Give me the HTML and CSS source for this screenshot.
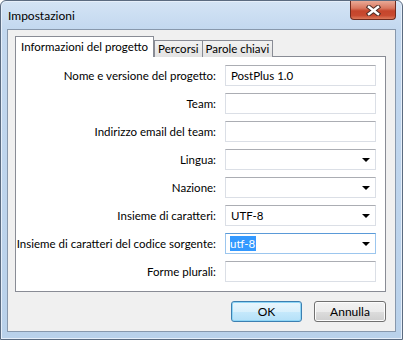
FILE: index.html
```html
<!DOCTYPE html>
<html lang="it">
<head>
    <meta charset="UTF-8">
    <title>Impostazioni</title>
    <link rel="stylesheet" href="styles.css">
</head>
<body>
    <div class="window">
        <div class="titlebar">
            <span class="title">Impostazioni</span>
            <div class="close">
                <svg width="15" height="11" viewBox="0 0 15 11">
                    <path d="M3 2 L12 9 M12 2 L3 9" stroke="#4a2a24" stroke-width="4.4" stroke-linecap="square"/>
                    <path d="M3 2 L12 9 M12 2 L3 9" stroke="#ffffff" stroke-width="2.5" stroke-linecap="square"/>
                </svg>
            </div>
        </div>
        <div class="client">
            <div class="tabs">
                <div class="tab active">Informazioni del progetto</div>
                <div class="tab">Percorsi</div>
                <div class="tab">Parole chiavi</div>
            </div>
            <div class="pane">
                <div class="form-grid">
                    <label>Nome e versione del progetto:</label>
                    <div class="field">PostPlus 1.0</div>

                    <label>Team:</label>
                    <div class="field"></div>

                    <label>Indirizzo email del team:</label>
                    <div class="field"></div>

                    <label>Lingua:</label>
                    <div class="field combo"><span></span><i class="arrow"></i></div>

                    <label>Nazione:</label>
                    <div class="field combo"><span></span><i class="arrow"></i></div>

                    <label>Insieme di caratteri:</label>
                    <div class="field combo"><span>UTF-8</span><i class="arrow"></i></div>

                    <label>Insieme di caratteri del codice sorgente:</label>
                    <div class="field combo focused"><span class="selected">utf-8</span><i class="arrow"></i></div>

                    <label>Forme plurali:</label>
                    <div class="field"></div>
                </div>
            </div>
            <div class="buttons">
                <button class="btn default">OK</button>
                <button class="btn">Annulla</button>
            </div>
        </div>
    </div>
</body>
</html>
```

FILE: styles.css
```css
body {
    margin: 0;
    padding: 0;
    font-family: 'Lato', sans-serif;
    font-size: 11.5px;
    color: #000;
    background: #fff;
}

.window {
    width: 403px;
    height: 340px;
    box-sizing: border-box;
    border: 1px solid #5b6b80;
    border-radius: 6px 6px 0 0;
    padding: 0 6px 7px;
    display: flex;
    flex-direction: column;
    background: linear-gradient(180deg, #d4e4f5 0px, #c3d8ef 28px, #b9d1ea 100%);
    box-shadow: inset 0 0 0 1px #e6effa;
}

.titlebar {
    height: 28px;
    display: flex;
    align-items: flex-start;
}

.title {
    padding: 7px 0 0 1px;
    font-size: 12px;
    color: #000;
}

.close {
    margin-left: auto;
    width: 46px;
    height: 19px;
    box-sizing: border-box;
    border: 1px solid #6e2b1f;
    border-top: none;
    border-radius: 0 0 4px 4px;
    background: linear-gradient(180deg, #e9a996 0%, #d9775f 40%, #c5452c 55%, #c84a30 80%, #dd7a5c 100%);
    display: flex;
    align-items: center;
    justify-content: center;
}

.client {
    flex: 1;
    background: #f0f0f0;
    border: 1px solid #8898ac;
    padding: 7px 9px 8px 7px;
    display: flex;
    flex-direction: column;
}

.tabs {
    display: flex;
    align-items: flex-end;
    height: 20px;
    margin-bottom: -1px;
    position: relative;
    z-index: 1;
}

.tab {
    height: 17px;
    box-sizing: border-box;
    border: 1px solid #898c95;
    border-bottom: none;
    margin-left: -1px;
    padding: 0 3px;
    line-height: 16px;
    background: linear-gradient(180deg, #f2f2f2, #e3e3e3);
}

.tab.active {
    height: 21px;
    margin-left: 0;
    padding: 0 5px;
    line-height: 19px;
    background: #fff;
    margin-right: 1px;
}

.pane {
    background: #fff;
    border: 1px solid #898c95;
    padding: 8px 9px 9px 0;
}

.form-grid {
    display: grid;
    grid-template-columns: minmax(0, 1fr) 151px;
    grid-auto-rows: 21px;
    column-gap: 9px;
    row-gap: 7px;
}

.form-grid label {
    text-align: right;
    line-height: 21px;
    white-space: nowrap;
    color: #000;
}

.field {
    box-sizing: border-box;
    border: 1px solid #dbdfe6;
    border-top-color: #abadb3;
    background: #fff;
    padding: 0 5px;
    line-height: 19px;
    display: flex;
    align-items: center;
}

.combo span {
    flex: 1;
}

.arrow {
    width: 0;
    height: 0;
    border-left: 4px solid transparent;
    border-right: 4px solid transparent;
    border-top: 4px solid #000;
    margin-right: 0;
}

.focused {
    border-color: #9cc6ee;
    border-top-color: #5a9ad8;
}

.selected {
    flex: none !important;
    background: #3399ff;
    color: #fff;
    line-height: 15px;
    margin-left: -1px;
    padding-right: 1px;
}

.combo .selected + .arrow {
    margin-left: auto;
}

.buttons {
    display: flex;
    justify-content: flex-end;
    gap: 12px;
    margin-top: 9px;
}

.btn {
    width: 72px;
    height: 21px;
    font-family: inherit;
    font-size: 12px;
    color: #000;
    border: 1px solid #707070;
    border-radius: 3px;
    background: linear-gradient(180deg, #f2f2f2 0%, #ebebeb 50%, #dddddd 51%, #cfcfcf 100%);
    box-shadow: inset 0 0 0 1px #fcfcfc;
    padding: 0;
}

.btn.default {
    width: 71px;
    border-color: #3c7fb1;
    background: linear-gradient(180deg, #eaf6fd 0%, #d9f0fc 50%, #c6e9fc 51%, #b4e0f8 100%);
    box-shadow: inset 0 0 0 1px #8fd6f6;
}
```
